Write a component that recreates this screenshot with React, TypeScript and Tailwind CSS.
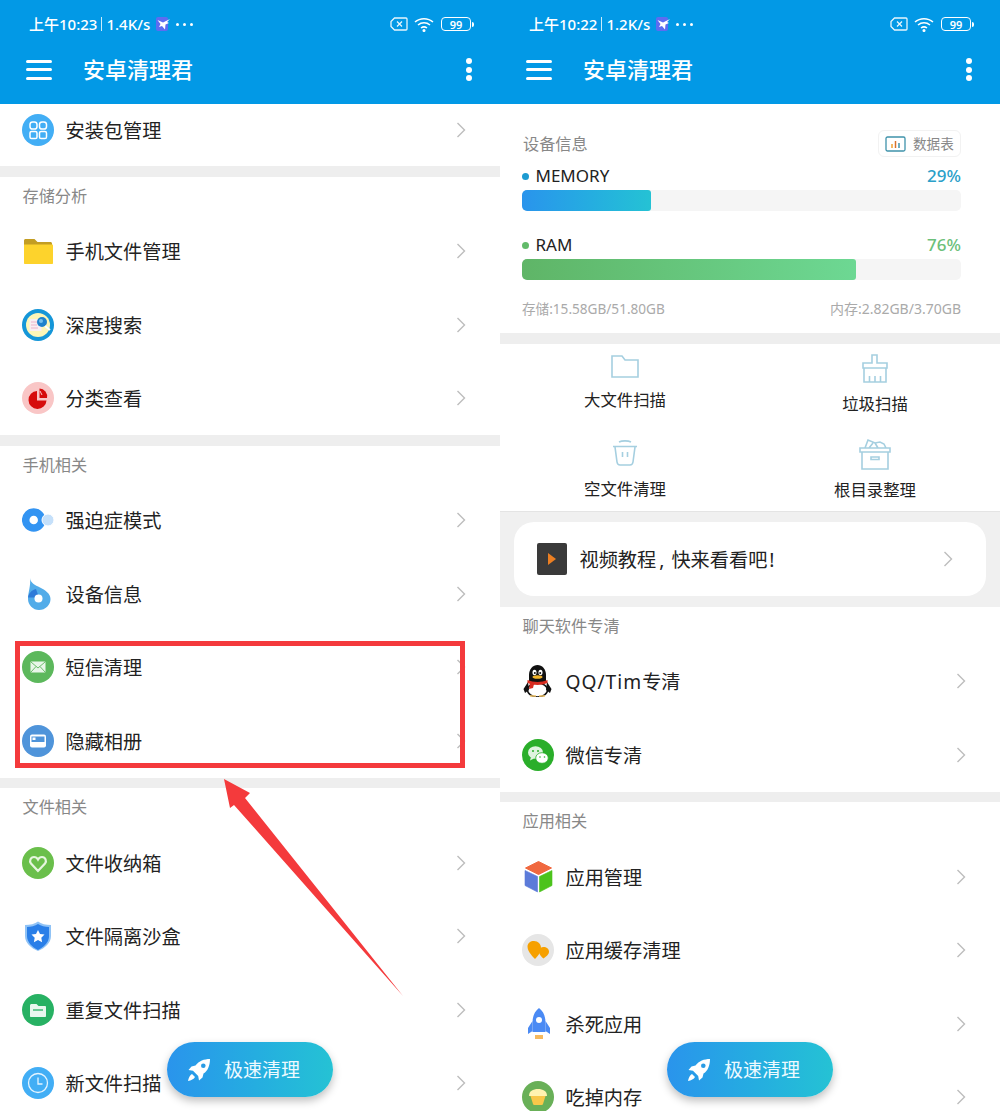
import type { ReactNode } from "react";

const FONT = { fontFamily: '"Noto Sans", "Noto Sans CJK SC", sans-serif' };

const Chevron = () => (
    <svg width="10" height="16" viewBox="0 0 10 16" fill="none" className="shrink-0">
        <path d="M1.5 1 8.5 8 1.5 15" stroke="#bdbdbd" strokeWidth="1.4" />
    </svg>
);

const Circle = ({ color, children }: { color: string; children?: ReactNode }) => (
    <svg width="32" height="32" viewBox="0 0 32 32">
        <circle cx="16" cy="16" r="16" fill={color} />
        {children}
    </svg>
);

const Icon32 = ({ children }: { children: ReactNode }) => (
    <svg width="32" height="32" viewBox="0 0 32 32">
        {children}
    </svg>
);

const AppsIcon = () => (
    <Circle color="#42aef5">
        <g fill="none" stroke="#fff" strokeWidth="1.5">
            <rect x="8" y="8" width="7" height="7" rx="2.6" />
            <rect x="17.5" y="8" width="7" height="7" rx="2.6" />
            <rect x="8" y="17.5" width="7" height="7" rx="1.6" />
            <rect x="17.5" y="17.5" width="7" height="7" rx="1.6" />
        </g>
    </Circle>
);

const FolderIcon = () => (
    <Icon32>
        <path d="M2 5.5C2 4.7 2.7 4 3.500 4h9l3 3h13c.8 0 1.500.7 1.500 1.500V12H2z" fill="#c39d22" />
        <path d="M2 9.500h28c.6 0 1 .4 1 1V28c0 .6-.4 1-1 1H3c-.6 0-1-.4-1-1z" fill="#fdd32c" />
    </Icon32>
);

const SearchIcon = () => (
    <Circle color="#1596d8">
        <circle cx="16" cy="16" r="12" fill="#fdf6b8" />
        <rect x="7.500" y="10" width="12" height="12" fill="#f9eef2" />
        <path d="M9 13h6M9 16h6M9 19h7" stroke="#eeb4cb" strokeWidth="1.2" />
        <circle cx="20" cy="13" r="5" fill="#1f82cc" />
        <circle cx="19" cy="12" r="2" fill="#74c0ee" />
        <path d="M23 17l5 4" stroke="#fff" strokeWidth="2" />
    </Circle>
);

const PieIcon = () => (
    <Circle color="#f9c6c6">
        <path d="M15 9a9 9 0 1 0 9.500 9.500H15z" fill="#d60c0c" />
        <path d="M17.500 6.500 v9.500 h7.500 a8 8 0 0 0-7.500-9.500z" fill="#d60c0c" />
        <path d="M18 9l2 4" stroke="#f9c6c6" strokeWidth="1" />
    </Circle>
);

const ToggleIcon = () => (
    <Icon32>
        <circle cx="11.700" cy="16" r="8" fill="none" stroke="#3394f2" strokeWidth="7.500" />
        <circle cx="26" cy="16" r="6" fill="#c5e0fa" stroke="#fff" strokeWidth="1" />
    </Icon32>
);

const DropIcon = () => (
    <Icon32>
        <path d="M8 0c.5 5 5 7 10 9.500 5 2.500 10.500 6 10.500 11.500C28.500 27 23.500 32 17 32 11 32 6 27 6 21 6 14 9 8 8 0z" fill="#52ace9" />
        <path d="M6 19.500c.5-4 3.500-7.500 8-8.500l3 8.500z" fill="#2f7bd8" />
        <circle cx="16.500" cy="20.500" r="4" fill="#fff" />
    </Icon32>
);

const MailIcon = () => (
    <Circle color="#5cb85c">
        <rect x="8.500" y="10.500" width="15" height="11" rx="1" fill="#e9f6e9" />
        <path d="M9 11l7 6 7-6M9 21l5-5.500M23 21l-5-5.500" fill="none" stroke="#5cb85c" strokeWidth=".9" />
    </Circle>
);

const PhotoIcon = () => (
    <Circle color="#4f94da">
        <rect x="8" y="9.500" width="16" height="13" rx="2" fill="#fff" />
        <path d="M9.500 11.500h13v5.500h-13z" fill="#4f94da" />
        <rect x="10.500" y="12.500" width="3" height="2.500" fill="#fff" />
    </Circle>
);

const HeartIcon = () => (
    <Circle color="#6abf4b">
        <path
            d="M16 24 9 16.500c-2-2.500-.5-6.500 3-6.500 1.800 0 3.200 1 4 2.500.8-1.500 2.200-2.500 4-2.500 3.500 0 5 4 3 6.500z"
            fill="none"
            stroke="#e6f5df"
            strokeWidth="2.200"
        />
    </Circle>
);

const ShieldIcon = () => (
    <Icon32>
        <path d="M16 1.500C13 4 8 5 3 5v11c0 7 6 12 13 15 7-3 13-8 13-15V5c-5 0-10-1-13-3.500z" fill="#90c3f6" />
        <path d="M16 4C13 6 9 7 5 7v9c0 6 5 11 11 14 4-2 8-5 10-9-5 0-10-3-10-17z" fill="#2a7fe8" />
        <path d="M16 4c3 2 7 3 11 3v9c0 2-.5 3.500-1 5H14z" fill="#2a7fe8" />
        <path d="m16 10 2 4 4.500.6-3.200 3.200.8 4.500-4.100-2.200-4.100 2.200.8-4.500-3.200-3.200L14 14z" fill="#fff" />
    </Icon32>
);

const GreenFolderIcon = () => (
    <Circle color="#27b163">
        <path d="M8 11.500c0-.8.7-1.500 1.500-1.500h5l2 2H23c.6 0 1 .5 1 1V22c0 .6-.4 1-1 1H9c-.6 0-1-.4-1-1z" fill="#e8f7ee" />
        <path d="M11 16h10" stroke="#27b163" strokeWidth="1.300" />
    </Circle>
);

const ClockIcon = () => (
    <Circle color="#42aef5">
        <circle cx="16" cy="16" r="9.500" fill="none" stroke="#e4f4ff" strokeWidth="1.300" />
        <path d="M16 10.500V17h4.500" fill="none" stroke="#e4f4ff" strokeWidth="1.300" />
    </Circle>
);

const QQIcon = () => (
    <Icon32>
        <ellipse cx="15.500" cy="25" rx="10" ry="7" fill="#fff" stroke="#111" strokeWidth="1.500" />
        <path d="M7 10C7 4 11 0 15.500 0 20 0 24 4 24 10v8H7z" fill="#111" />
        <path d="M6 17 1.500 24l1.500 4 4-3zM25 17l4.500 7-1.500 4-4-3z" fill="#111" />
        <ellipse cx="12.500" cy="7.500" rx="2" ry="2.800" fill="#fff" />
        <ellipse cx="18.500" cy="7.500" rx="2" ry="2.800" fill="#fff" />
        <circle cx="12.800" cy="8" r="1" fill="#111" />
        <circle cx="18.200" cy="8" r="1" fill="#111" />
        <ellipse cx="15.500" cy="12" rx="5" ry="1.800" fill="#f0b429" />
        <path d="M5.500 15c6 2.500 14 2.500 20 0v3c-6 2.500-14 2.500-20 0z" fill="#d82c20" />
        <path d="M8 18l-1 6 4-1 1-4z" fill="#d82c20" />
        <path d="M8 31h6M17 31h6" stroke="#f5c86b" strokeWidth="1.500" />
    </Icon32>
);

const WechatIcon = () => (
    <Circle color="#2aae2a">
        <ellipse cx="13.500" cy="13.500" rx="7.500" ry="6.300" fill="#dff3df" />
        <path d="M9 18l-1 3.500 4-2z" fill="#dff3df" />
        <ellipse cx="20" cy="19" rx="6.300" ry="5.300" fill="#fff" stroke="#2aae2a" strokeWidth=".8" />
        <circle cx="11" cy="12" r="1" fill="#2aae2a" />
        <circle cx="16" cy="12" r="1" fill="#2aae2a" />
        <circle cx="18" cy="18" r=".8" fill="#2aae2a" />
        <circle cx="22.500" cy="18" r=".8" fill="#2aae2a" />
    </Circle>
);

const CubeIcon = () => (
    <Icon32>
        <path d="M16.500 .5 29.500 7 16.500 13.500 3.500 7z" fill="#f0683f" stroke="#f0683f" strokeLinejoin="round" />
        <path d="M3 9.500l12.500 6V31L3 24.500z" fill="#5c7bd9" stroke="#5c7bd9" strokeWidth=".6" strokeLinejoin="round" />
        <path d="M30 9.500l-12.500 6V31L30 24.500z" fill="#4cc31c" stroke="#4cc31c" strokeWidth=".6" strokeLinejoin="round" />
    </Icon32>
);

const CacheIcon = () => (
    <Circle color="#e6e6e6">
        <path d="M13 25C8 20 5.500 16 5.500 12.500 5.500 9 8.500 7 12 7c4 0 7 3 7 7 0 4-3 8-6 11z" fill="#f6a000" />
        <path d="M21.500 24.500c-2-1.500-4.500-4-4.500-7 0-2.500 2-4.500 4.500-4.500 3 0 5.500 2 5.500 4.800 0 2.700-3 5-5.500 6.700z" fill="#f6a000" />
    </Circle>
);

const RocketIcon = () => (
    <Icon32>
        <path d="M17 0c5 4 6.500 9 6.500 15v9h-13v-9C10.500 9 12 4 17 0z" fill="#4a8af4" />
        <path d="M10.500 13 6 20v6l4.500-3zM23.500 13l4.500 7v6l-4.500-3z" fill="#4a8af4" />
        <circle cx="17" cy="12" r="3" fill="#fff" />
        <path d="M13 27h8v4h-8z" fill="#f5b95f" />
    </Icon32>
);

const CupcakeIcon = () => (
    <Circle color="#69b058">
        <path d="M7 15c0-5 4-7 9-7s9 2 9 7z" fill="#fff3b0" />
        <path d="M8.500 15h15L21 23c-.2.600-.6 1-1.200 1h-7.600c-.6 0-1-.4-1.200-1z" fill="#f8c84a" />
    </Circle>
);

const Rocket = () => (
    <svg width="24" height="24" viewBox="0 0 24 24">
        <path d="M23 1c-6 0-11 2-14.500 6.500L4.500 8.500 1.500 12l4.500.8 5.200 5.200.8 4.500 3.500-3 1-4C21 13 23 7 23 1z" fill="#fff" />
        <circle cx="16.300" cy="7.700" r="2.300" fill="#2a9be4" />
        <path d="M5 16c-2 1-3.500 4-4 7 3-.5 6-2 7-4z" fill="#fff" />
    </svg>
);

const FastClean = () => (
    <div className="absolute left-[167px] top-[1042px] flex h-[55px] w-[166px] items-center rounded-full bg-gradient-to-r from-[#2a94ec] to-[#25c2d4] pl-[20px] shadow-[0_4px_8px_rgba(0,0,0,0.25)]">
        <Rocket />
        <span className="ml-[13px] pt-[2px] text-[19px] text-[#eefaff]">极速清理</span>
    </div>
);

const Header = ({ time, speed }: { time: string; speed: string }) => (
    <div className="relative z-10 h-[104px] bg-[#0299e6] text-white">
        <div className="flex h-[48px] items-center pl-[29px] pr-[26px] text-[15px] font-medium">
            <span>{time}</span>
            <span className="mx-[4px] h-[14px] w-px bg-white/80" />
            <span>{speed}</span>
            <svg width="16" height="16" viewBox="0 0 16 16" className="ml-[5px]">
                <rect x="1" y="1" width="12" height="14" rx="2" fill="#5d6cf0" />
                <path d="M15 3 8 6.500 2.500 4l3 4-1.500 3 3-1 3 3.500.5-5L14 7l-2-1z" fill="#fff" />
            </svg>
            <span className="ml-[5px] flex gap-[4px]">
                <i className="h-[3px] w-[3px] rounded-full bg-white" />
                <i className="h-[3px] w-[3px] rounded-full bg-white" />
                <i className="h-[3px] w-[3px] rounded-full bg-white" />
            </span>
            <svg width="18" height="14" viewBox="0 0 18 14" fill="none" stroke="#fff" strokeWidth="1.300" className="ml-auto mr-[-1px] opacity-90">
                <path d="M4.500 1H16c.6 0 1 .4 1 1v10c0 .6-.4 1-1 1H4.500L1 9.500V4.500z" />
                <path d="m7 4.500 5 5M12 4.500l-5 5" />
            </svg>
            <svg width="20" height="15" viewBox="0 0 20 15" fill="none" stroke="#fff" strokeWidth="1.500" className="ml-[7px]">
                <path d="M1 5c5-4.500 13-4.500 18 0M4 8c3.500-3 8.500-3 12 0M7 11c2-1.500 4-1.500 6 0" />
                <circle cx="10" cy="13.500" r=".8" fill="#fff" />
            </svg>
            <div className="ml-[7px] flex items-center">
                <div className="flex h-[14px] w-[30px] items-center justify-center rounded-[4px] border border-white text-[11px] font-semibold leading-none">
                    99
                </div>
                <i className="ml-px h-[5px] w-[2px] rounded-r-full bg-white" />
            </div>
        </div>
        <div className="flex h-[43px] items-center pl-[26px] pr-[28px]">
            <div className="flex w-[26px] flex-col gap-[5.500px]">
                <i className="h-[3px] rounded-full bg-white" />
                <i className="h-[3px] rounded-full bg-white" />
                <i className="h-[3px] rounded-full bg-white" />
            </div>
            <span className="ml-[31px] text-[22px] font-medium">安卓清理君</span>
            <div className="ml-auto flex flex-col gap-[2.500px]">
                <i className="h-[6px] w-[6px] rounded-full bg-white" />
                <i className="h-[6px] w-[6px] rounded-full bg-white" />
                <i className="h-[6px] w-[6px] rounded-full bg-white" />
            </div>
        </div>
    </div>
);

const Row = ({ icon, text, className = "h-[73.5px]" }: { icon: ReactNode; text: ReactNode; className?: string }) => (
    <div className={`flex items-center pl-[22px] pr-[34px] ${className}`}>
        <div className="h-8 w-8 shrink-0">{icon}</div>
        <span className="ml-[11.500px] flex-1 pt-[3px] text-[19.200px] text-[#222]">{text}</span>
        <Chevron />
    </div>
);

const Divider = () => <div className="h-[10.500px] bg-[#eeeeee]" />;

const SectionLabel = ({ text }: { text: string }) => (
    <div className="flex h-[38px] items-start pl-[22.500px] pt-[7px] text-[16.200px] leading-[24px] text-[#888]">{text}</div>
);

const LeftPanel = () => (
    <div className="relative h-[1111px] w-[500px] overflow-hidden bg-white">
        <Header time="上午10:23" speed="1.4K/s" />
        <Row icon={<AppsIcon />} text="安装包管理" className="h-[62px] pb-[10px]" />
        <Divider />
        <SectionLabel text="存储分析" />
        <Row icon={<FolderIcon />} text="手机文件管理" />
        <Row icon={<SearchIcon />} text="深度搜索" />
        <Row icon={<PieIcon />} text="分类查看" />
        <Divider />
        <SectionLabel text="手机相关" />
        <Row icon={<ToggleIcon />} text="强迫症模式" />
        <Row icon={<DropIcon />} text="设备信息" />
        <Row icon={<MailIcon />} text="短信清理" />
        <Row icon={<PhotoIcon />} text="隐藏相册" />
        <Divider />
        <SectionLabel text="文件相关" />
        <Row icon={<HeartIcon />} text="文件收纳箱" />
        <Row icon={<ShieldIcon />} text="文件隔离沙盒" />
        <Row icon={<GreenFolderIcon />} text="重复文件扫描" />
        <Row icon={<ClockIcon />} text="新文件扫描" />
        <FastClean />
        {/* annotation drawn over the screenshot */}
        <div className="absolute left-[15px] top-[641px] h-[127px] w-[450px] border-[5px] border-[#f43a3c]" />
        <svg width="500" height="1111" className="pointer-events-none absolute left-0 top-0">
            <polygon points="224,779 250,793 245,798 403,996 234,805 230,808" fill="#f43a3c" />
        </svg>
    </div>
);

const Meter = ({
    label,
    pct,
    dot,
    pctClass,
    barClass,
    width,
}: {
    label: string;
    pct: string;
    dot: string;
    pctClass: string;
    barClass: string;
    width: number;
}) => (
    <div>
        <div className="flex h-[24px] items-center">
            <i className={`h-[7px] w-[7px] rounded-full ${dot}`} />
            <span className="ml-[6.500px] flex-1 text-[17px] text-[#222]">{label}</span>
            <span className={`text-[17px] font-medium ${pctClass}`}>{pct}</span>
        </div>
        <div className="mt-[2px] h-[21px] overflow-hidden rounded-[5px] bg-[#f5f5f5]">
            <div className={`h-full rounded-[3px] ${barClass}`} style={{ width }} />
        </div>
    </div>
);

const Tool = ({ icon, text, top, gap }: { icon: ReactNode; text: string; top: string; gap: string }) => (
    <div className={`flex flex-col items-center ${top}`}>
        {icon}
        <span className={`text-[16.400px] leading-[24px] text-[#222] ${gap}`}>{text}</span>
    </div>
);

const toolStroke = { fill: "none", stroke: "#a5cfe0", strokeWidth: 1.6 };

const DeviceInfo = () => (
    <div className="h-[229px] pl-[22px] pr-[39px] pt-[26px]">
        <div className="flex h-[27px] items-center justify-between">
            <span className="pl-px pt-[2px] text-[16.200px] text-[#888]">设备信息</span>
            <div className="flex h-[27px] w-[83px] items-center rounded-[6px] border border-[#f2f2f2] pl-[6px]">
                <svg width="21" height="16" viewBox="0 0 21 16">
                    <rect x="1" y="1" width="19" height="14" rx="1.500" fill="none" stroke="#3f93ab" strokeWidth="1.300" />
                    <path d="M7 8v4" stroke="#f0a030" strokeWidth="1.500" />
                    <path d="M10.500 5v7" stroke="#d8732c" strokeWidth="1.500" />
                    <path d="M14 7v5" stroke="#3f93ab" strokeWidth="1.500" />
                </svg>
                <span className="ml-[7px] pt-[1px] text-[13.600px] text-[#888]">数据表</span>
            </div>
        </div>
        <div className="mt-[7px]">
            <Meter
                label="MEMORY"
                pct="29%"
                dot="bg-[#1d9bd1]"
                pctClass="text-[#2ba0c9]"
                barClass="bg-gradient-to-r from-[#2a94ec] to-[#25c2d4]"
                width={129}
            />
        </div>
        <div className="mt-[22px]">
            <Meter
                label="RAM"
                pct="76%"
                dot="bg-[#62bb6a]"
                pctClass="text-[#6cc07a]"
                barClass="bg-gradient-to-r from-[#5fb567] to-[#6dd893]"
                width={334}
            />
        </div>
        <div className="mt-[18px] flex items-center justify-between text-[14px] leading-[22px] text-[#aaa]">
            <span className="text-[13.600px]">存储:15.58GB/51.80GB</span>
            <span>内存:2.82GB/3.70GB</span>
        </div>
    </div>
);

const Tools = () => (
    <div className="grid h-[168px] grid-cols-2 grid-rows-2 border-b border-[#e4e4e4]">
        <Tool
            top="pt-[10px]"
            gap="mt-[10px]"
            text="大文件扫描"
            icon={
                <svg width="30" height="24" viewBox="0 0 30 24" {...toolStroke}>
                    <path d="M2 2h10l3 4h13v17H2z" />
                </svg>
            }
        />
        <Tool
            top="pt-[10px]"
            gap="mt-[9px]"
            text="垃圾扫描"
            icon={
                <svg width="28" height="29" viewBox="0 0 28 29" {...toolStroke}>
                    <path d="M11 1h5v8h10v5H2V9h9zM3 14v14h22V14M8.500 28v-6M14 28v-6M19.500 28v-6" />
                </svg>
            }
        />
        <Tool
            top="pt-[12px]"
            gap="mt-[10px]"
            text="空文件清理"
            icon={
                <svg width="28" height="28" viewBox="0 0 28 28" {...toolStroke}>
                    <path d="M2 7.500h24M8 3c3-1.500 9-1.500 12 0M4 8l2 15c.3 2 1.500 3 3 3h10c1.500 0 2.700-1 3-3l2-15M11.500 13v5M16.500 13v5" />
                </svg>
            }
        />
        <Tool
            top="pt-[11px]"
            gap="mt-[8px]"
            text="根目录整理"
            icon={
                <svg width="34" height="32" viewBox="0 0 34 32" {...toolStroke}>
                    <path d="M2 10h30v4H2zM4 14v17h26V14M13 19h8v2.500h-8zM7 10l3-8 7 3 5-1 4 2 2 4M11 10l4-5M20 10l-3-5" />
                </svg>
            }
        />
    </div>
);

const VideoCard = () => (
    <div className="h-[95px] bg-[#f0f0f0] px-[14px] pt-[10px]">
        <div className="flex h-[74px] items-center rounded-[20px] bg-white pl-[23px] pr-[33px]">
            <div className="flex h-[32px] w-[30px] items-center justify-center rounded-[2px] bg-[#3a3a3a]">
                <svg width="10" height="14" viewBox="0 0 10 14">
                    <path d="M1 1l8 6-8 6z" fill="#ec7f22" />
                </svg>
            </div>
            <span className="ml-[12.500px] flex-1 pt-[4px] text-[19.200px] text-[#222]">
                视频教程<span className="ml-[3px] mr-[7px]">,</span>快来看看吧<span className="ml-[2px]">!</span>
            </span>
            <Chevron />
        </div>
    </div>
);

const RightPanel = () => (
    <div className="relative h-[1111px] w-[500px] overflow-hidden bg-white">
        <Header time="上午10:22" speed="1.2K/s" />
        <DeviceInfo />
        <Divider />
        <Tools />
        <VideoCard />
        <SectionLabel text="聊天软件专清" />
        <Row
            icon={<QQIcon />}
            text={
                <>
                    <span className="tracking-[1px]">QQ/Tim</span>专清
                </>
            }
        />
        <Row icon={<WechatIcon />} text="微信专清" />
        <Divider />
        <SectionLabel text="应用相关" />
        <Row icon={<CubeIcon />} text="应用管理" />
        <Row icon={<CacheIcon />} text="应用缓存清理" />
        <Row icon={<RocketIcon />} text="杀死应用" />
        <Row icon={<CupcakeIcon />} text="吃掉内存" />
        <FastClean />
    </div>
);

export default function App() {
    return (
        <div className="flex h-[1111px] w-[1000px] overflow-hidden" style={FONT}>
            <LeftPanel />
            <RightPanel />
        </div>
    );
}
